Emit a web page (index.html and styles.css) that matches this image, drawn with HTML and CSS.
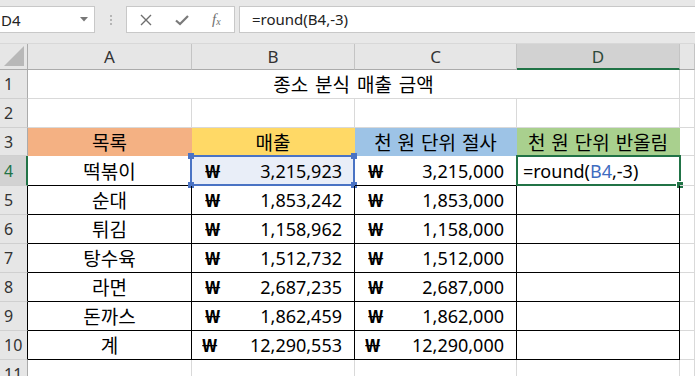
FILE: index.html
```html
<!DOCTYPE html>
<html lang="ko">
<head>
<meta charset="utf-8">
<link rel="stylesheet" href="styles.css">
</head>
<body>
<div class="toolbar">
  <div class="namebox">
    <span class="nb-text">D4</span>
    <svg class="nb-arrow" width="8" height="5" viewBox="0 0 8 5"><path d="M0 0H8L4 4.5Z" fill="#777"/></svg>
  </div>
  <div class="dots"><i></i><i></i><i></i></div>
  <div class="btns">
    <svg class="ic" width="12" height="12" viewBox="0 0 12 12"><path d="M1 1L11 11M11 1L1 11" stroke="#6e6e6e" stroke-width="1.4"/></svg>
    <svg class="ic" width="14" height="12" viewBox="0 0 14 12"><path d="M1 6.5L5 10L13 2" stroke="#7a7a7a" stroke-width="2.2" fill="none"/></svg>
    <span class="fx">f<sub>x</sub></span>
  </div>
  <div class="formula">=round(B4,-3)</div>
</div>
<div class="sheet">
  <div class="corner"><svg width="20" height="20" viewBox="0 0 20 20"><path d="M20 0V20H0Z" fill="#b8b8b8"/></svg></div>
  <div class="ch">A</div>
  <div class="ch">B</div>
  <div class="ch">C</div>
  <div class="ch ch-sel">D</div>
  <div class="ch"></div>

  <div class="rh">1</div>
  <div class="c title ko">종소 분식 매출 금액</div>
  <div class="c"></div>

  <div class="rh">2</div>
  <div class="c"></div><div class="c"></div><div class="c"></div><div class="c"></div><div class="c"></div>

  <div class="rh">3</div>
  <div class="c hd hd-a ko">목록</div>
  <div class="c hd hd-b ko">매출</div>
  <div class="c hd hd-c ko">천 원 단위 절사</div>
  <div class="c hd hd-d ko">천 원 단위 반올림</div>
  <div class="c"></div>

  <div class="rh rh-sel tbl">4</div>
  <div class="c tb ctr ko">떡볶이</div>
  <div class="c tb num ref"><span class="won">₩</span><span>3,215,923</span><i class="refbox"><b class="h tl"></b><b class="h tr"></b><b class="h bl"></b><b class="h br"></b></i></div>
  <div class="c tb num"><span class="won">₩</span><span>3,215,000</span></div>
  <div class="c tb active">=round(<span class="blue">B4</span>,-3)<i class="actbox"><b class="ah"></b></i></div>
  <div class="c"></div>

  <div class="rh tbl">5</div>
  <div class="c tb ctr ko">순대</div>
  <div class="c tb num"><span class="won">₩</span><span>1,853,242</span></div>
  <div class="c tb num"><span class="won">₩</span><span>1,853,000</span></div>
  <div class="c tb"></div>
  <div class="c"></div>

  <div class="rh tbl">6</div>
  <div class="c tb ctr ko">튀김</div>
  <div class="c tb num"><span class="won">₩</span><span>1,158,962</span></div>
  <div class="c tb num"><span class="won">₩</span><span>1,158,000</span></div>
  <div class="c tb"></div>
  <div class="c"></div>

  <div class="rh tbl">7</div>
  <div class="c tb ctr ko">탕수육</div>
  <div class="c tb num"><span class="won">₩</span><span>1,512,732</span></div>
  <div class="c tb num"><span class="won">₩</span><span>1,512,000</span></div>
  <div class="c tb"></div>
  <div class="c"></div>

  <div class="rh tbl">8</div>
  <div class="c tb ctr ko">라면</div>
  <div class="c tb num"><span class="won">₩</span><span>2,687,235</span></div>
  <div class="c tb num"><span class="won">₩</span><span>2,687,000</span></div>
  <div class="c tb"></div>
  <div class="c"></div>

  <div class="rh tbl">9</div>
  <div class="c tb ctr ko">돈까스</div>
  <div class="c tb num"><span class="won">₩</span><span>1,862,459</span></div>
  <div class="c tb num"><span class="won">₩</span><span>1,862,000</span></div>
  <div class="c tb"></div>
  <div class="c"></div>

  <div class="rh tbl">10</div>
  <div class="c tb ctr ko">계</div>
  <div class="c tb num wide"><span class="won">₩</span><span>12,290,553</span></div>
  <div class="c tb num wide"><span class="won">₩</span><span>12,290,000</span></div>
  <div class="c tb"></div>
  <div class="c"></div>

  <div class="rh">11</div>
  <div class="c"></div><div class="c"></div><div class="c"></div><div class="c"></div><div class="c"></div>
</div>
</body>
</html>
```
FILE: styles.css
```css
html, body {
  margin: 0;
  padding: 0;
}
body {
  width: 695px;
  height: 376px;
  overflow: hidden;
  background: #ffffff;
  font-family: "Noto Sans", "Noto Sans CJK KR", sans-serif;
  color: #000;
}

/* formula bar */
.toolbar {
  height: 44px;
  box-sizing: border-box;
  background: #e8e8e8;
  display: flex;
  align-items: flex-start;
  padding-top: 6px;
  border-bottom: 1px solid #d8d8d8;
}
.namebox {
  width: 95px;
  height: 27px;
  box-sizing: border-box;
  background: #fff;
  border: 1px solid #c8c8c8;
  border-left: none;
  display: flex;
  align-items: center;
  justify-content: space-between;
  padding: 0 6px 0 1px;
}
.nb-text {
  font-size: 15px;
  color: #222;
}
.dots {
  width: 31px;
  height: 27px;
  display: flex;
  flex-direction: column;
  align-items: center;
  justify-content: center;
  gap: 2px;
}
.dots i {
  width: 2px;
  height: 2px;
  background: #b5b5b5;
  display: block;
}
.btns {
  width: 109px;
  height: 27px;
  box-sizing: border-box;
  background: #fff;
  border: 1px solid #c8c8c8;
  display: flex;
  align-items: center;
  padding-left: 13px;
  gap: 23px;
}
.fx {
  font-family: "Liberation Serif", "DejaVu Serif", serif;
  font-style: italic;
  font-size: 15px;
  color: #707070;
  line-height: 1;
}
.fx sub {
  font-size: 10px;
  vertical-align: -1px;
}
.formula {
  flex: 1;
  margin-left: 4px;
  height: 27px;
  box-sizing: border-box;
  background: #fff;
  border: 1px solid #c8c8c8;
  border-right: none;
  padding-left: 12px;
  font-size: 15px;
  line-height: 25px;
  color: #222;
}

/* sheet grid */
.sheet {
  display: grid;
  grid-template-columns: 28px 164px 163px 162px 163px 1fr;
  grid-template-rows: 26px 29px 29px 28px 30px 29px 29px 29px 29px 29px 29px 29px;
}
.sheet > div {
  box-sizing: border-box;
  min-width: 0;
}
.corner {
  background: #e6e6e6;
  border-right: 1px solid #ababab;
  border-bottom: 1px solid #ababab;
  display: flex;
  align-items: flex-end;
  justify-content: flex-end;
  padding: 0 3px 3px 0;
}
.ch {
  background: #e6e6e6;
  border-right: 1px solid #c4c4c4;
  border-bottom: 1px solid #ababab;
  text-align: center;
  font-size: 17px;
  line-height: 25px;
  color: #333;
}
.ch-sel {
  background: #d2d2d2;
  border-bottom: 2px solid #217346;
  color: #2d4a3a;
}
.rh {
  background: #e6e6e6;
  border-right: 1px solid #ababab;
  border-bottom: 1px solid #d0d0d0;
  font-size: 16px;
  color: #333;
  padding-left: 4px;
  display: flex;
  align-items: center;
}
.rh.tbl {
  border-right-color: #000;
}
.rh-sel {
  background: #d2d2d2;
  color: #217346;
  border-right: 2px solid #217346 !important;
}
.c {
  border-right: 1px solid #d9d9d9;
  border-bottom: 1px solid #d9d9d9;
  font-size: 18px;
  display: flex;
  align-items: center;
  position: relative;
  white-space: nowrap;
}
.ko {
  font-size: 19px;
}
.title {
  grid-column: span 4;
  justify-content: center;
  word-spacing: 2px;
}
.hd {
  justify-content: center;
  border-right-color: transparent;
  border-bottom-color: transparent;
  word-spacing: 1px;
}
.hd-a { background: #f4b183; }
.hd-b { background: #ffd966; }
.hd-c { background: #9dc3e6; }
.hd-d { background: #a9d08e; }
.tb {
  border-right-color: #000;
  border-bottom-color: #000;
}
.ctr {
  justify-content: center;
}
.num {
  justify-content: space-between;
  padding: 0 12px 0 14px;
}
.num.wide {
  padding-left: 11px;
}
.won {
  font-weight: bold;
  font-size: 18px;
  transform: scaleX(1.15);
}
.ref {
  background: #e9eef8;
}
.refbox {
  position: absolute;
  left: -2px;
  top: -1px;
  right: -1px;
  bottom: -1px;
  border: 2px solid #4a73c4;
}
.refbox .h {
  position: absolute;
  width: 6px;
  height: 6px;
  background: #4a73c4;
}
.refbox .tl { left: -4px; top: -4px; }
.refbox .tr { right: -4px; top: -4px; }
.refbox .bl { left: -4px; bottom: -4px; }
.refbox .br { right: -4px; bottom: -4px; }
.active {
  padding-left: 6px;
}
.blue {
  color: #3f6cc0;
}
.actbox {
  position: absolute;
  left: -1px;
  top: -1px;
  right: -2px;
  bottom: -1px;
  border: 2px solid #217346;
}
.actbox .ah {
  position: absolute;
  right: -4px;
  bottom: -4px;
  width: 6px;
  height: 6px;
  background: #217346;
  border-left: 1px solid #fff;
  border-top: 1px solid #fff;
}
```
